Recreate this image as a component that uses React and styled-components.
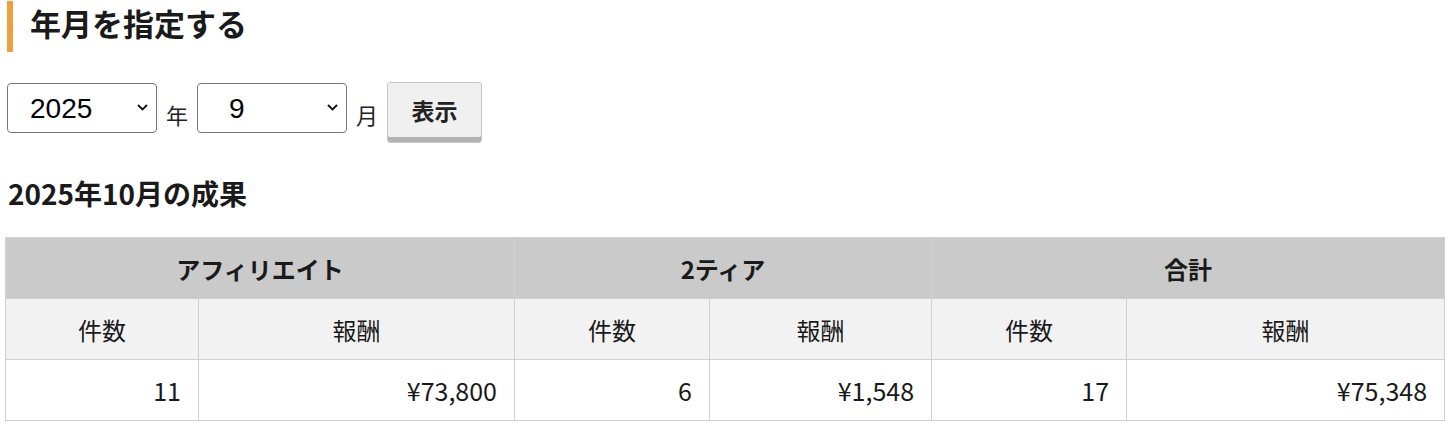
import React from 'react'
import styled, { createGlobalStyle } from 'styled-components'

const GlobalStyle = createGlobalStyle`
  body {
    margin: 0;
    background: #fff;
    color: #1a1a1a;
    font-family: "Noto Sans CJK JP", "Noto Sans", sans-serif;
  }
`

const Page = styled.div`
  padding: 1px 5px 0;
`

const SectionTitle = styled.h2`
  margin: 0 0 0 2px;
  height: 51px;
  padding-left: 17px;
  border-left: 6px solid #ee9f3e;
  font-size: 31px;
  font-weight: 700;
  line-height: 44px;
  color: #1a1a1a;
`

const FilterForm = styled.form`
  display: flex;
  align-items: flex-start;
  gap: 9px;
  margin: 30px 0 0 2px;
`

const SelectWrap = styled.div`
  position: relative;
  width: 150px;
  height: 50px;
  margin-top: 1px;
`

const Select = styled.select`
  appearance: none;
  width: 100%;
  height: 100%;
  padding: 0 30px 0 ${(p) => p.$indent || 18}px;
  border: 1px solid #767676;
  border-radius: 4px;
  background: #fff;
  font-family: Arial, "Liberation Sans", sans-serif;
  font-size: 28px;
  color: #000;
`

const Chevron = styled.svg`
  position: absolute;
  right: 9px;
  top: 21px;
  width: 11px;
  height: 7px;
  pointer-events: none;
`

const Unit = styled.span`
  align-self: center;
  margin-top: 2px;
  font-size: 22px;
  color: #222;
`

const ShowButton = styled.button`
  width: 95px;
  height: 61px;
  padding: 0 0 6px;
  border: 1px solid #c8c8c8;
  border-radius: 3px;
  background: #f0f0f0;
  box-shadow: inset 0 -5px 0 #b3b3b3;
  font-family: "Noto Sans CJK JP", sans-serif;
  font-size: 23px;
  font-weight: 700;
  color: #222;
`

const ResultTitle = styled.h3`
  margin: 33px 0 0 3px;
  font-size: 28px;
  font-weight: 700;
  line-height: 34px;
`

const Table = styled.table`
  width: 1439px;
  margin-top: 27px;
  border-collapse: collapse;
  table-layout: fixed;
`

const Cell = styled.td`
  height: 60px;
  padding: 0 16px;
  border: 1px solid #d0d0d0;
  font-size: 24px;
  text-align: ${(p) => p.$align || 'center'};
  background: ${(p) => p.$bg || '#fff'};
  font-weight: ${(p) => (p.$bold ? 700 : 400)};
  color: #1a1a1a;
`

const NumCell = styled(Cell)`
  font-size: 25px;
  padding-right: 17px;
`

const groups = ['アフィリエイト', '2ティア', '合計']
const widths = [193, 316, 195, 222, 195, 318]
const values = [
  ['11', '¥73,800'],
  ['6', '¥1,548'],
  ['17', '¥75,348'],
]

function Dropdown({ value, options, indent }) {
  return (
    <SelectWrap>
      <Select defaultValue={value} $indent={indent}>
        {options.map((o) => (
          <option key={o}>{o}</option>
        ))}
      </Select>
      <Chevron viewBox="0 0 11 7" fill="none">
        <path d="M1 1l4.5 4.5L10 1" stroke="#111" strokeWidth="1.8" />
      </Chevron>
    </SelectWrap>
  )
}

export default function App() {
  return (
    <Page>
      <GlobalStyle />
      <SectionTitle>年月を指定する</SectionTitle>
      <FilterForm onSubmit={(e) => e.preventDefault()}>
        <Dropdown value="2025" options={['2024', '2025']} indent={22} />
        <Unit>年</Unit>
        <Dropdown
          value="9"
          options={Array.from({ length: 12 }, (_, i) => String(i + 1))}
          indent={31}
        />
        <Unit>月</Unit>
        <ShowButton type="submit">表示</ShowButton>
      </FilterForm>
      <ResultTitle>2025年10月の成果</ResultTitle>
      <Table>
        <colgroup>
          {widths.map((w, i) => (
            <col key={i} style={{ width: w }} />
          ))}
        </colgroup>
        <tbody>
          <tr>
            {groups.map((g) => (
              <Cell as="th" key={g} colSpan={2} $bg="#cacaca" $bold>
                {g}
              </Cell>
            ))}
          </tr>
          <tr>
            {groups.map((g) => (
              <React.Fragment key={g}>
                <Cell $bg="#f2f2f2">件数</Cell>
                <Cell $bg="#f2f2f2">報酬</Cell>
              </React.Fragment>
            ))}
          </tr>
          <tr>
            {values.map(([count, amount], i) => (
              <React.Fragment key={i}>
                <NumCell $align="right">{count}</NumCell>
                <NumCell $align="right">{amount}</NumCell>
              </React.Fragment>
            ))}
          </tr>
        </tbody>
      </Table>
    </Page>
  )
}
